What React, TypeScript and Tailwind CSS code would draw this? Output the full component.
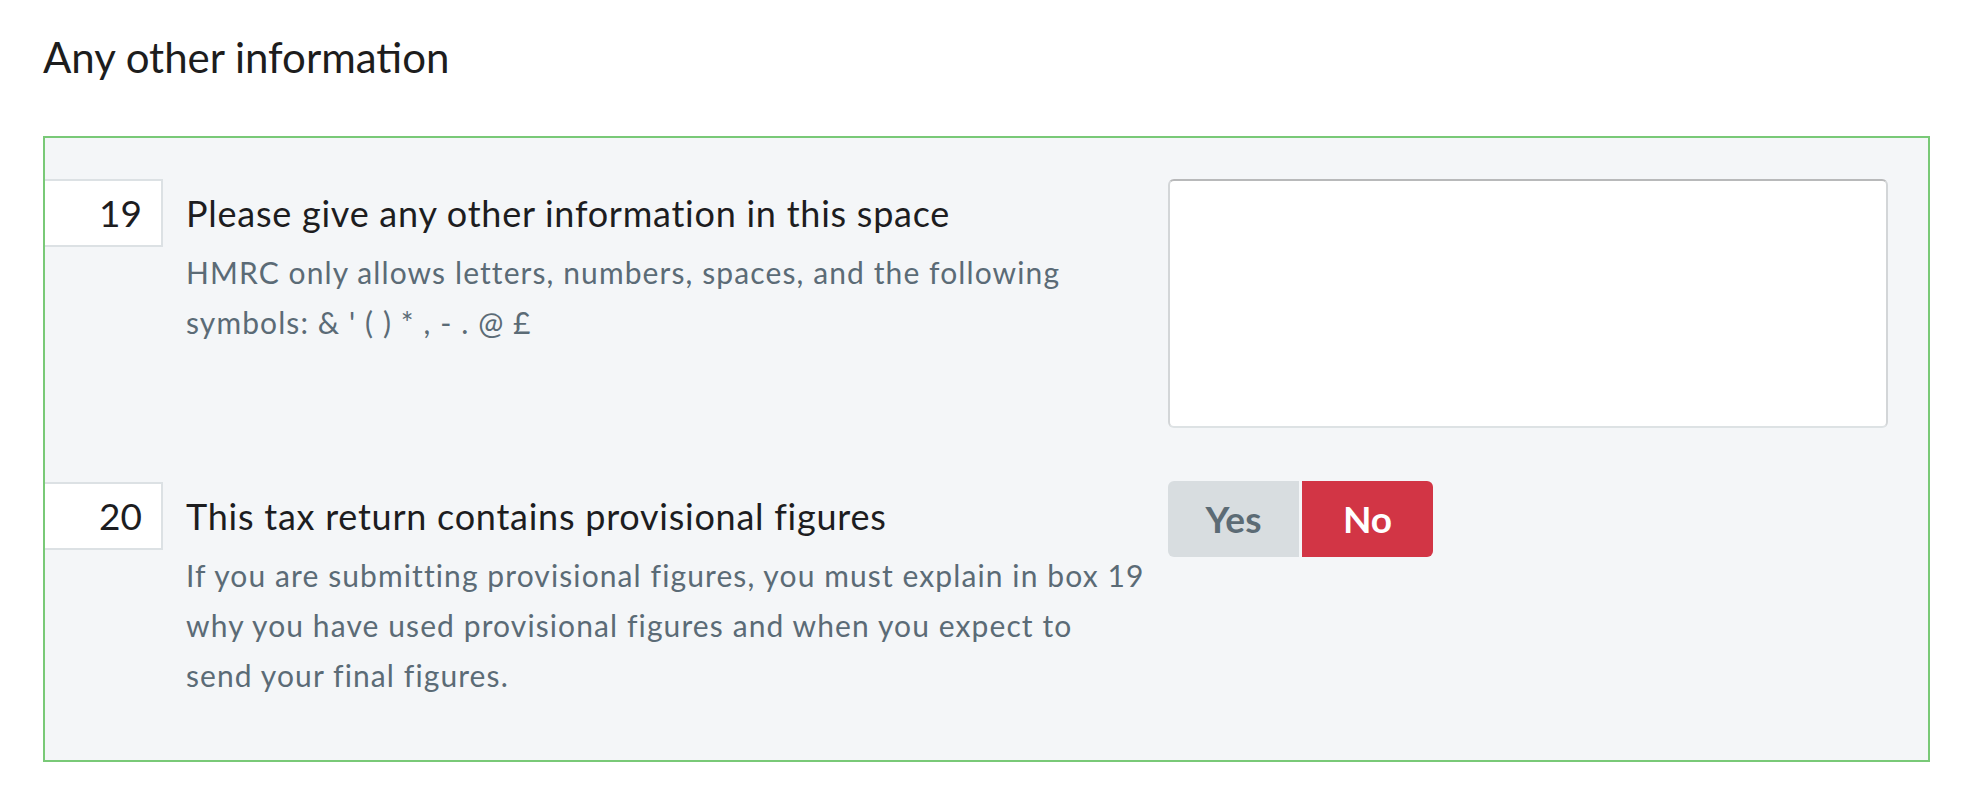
import { useState } from "react";

const font = { fontFamily: "Lato, 'Noto Sans', sans-serif" };

function NumberBox({ n }: { n: string }) {
    return (
        <div className="w-[118px] h-[68px] shrink-0 bg-white border-y-2 border-r-2 border-[#dce1e4] flex items-center justify-end pr-[19px] text-[37px] leading-[64px] text-[#1d1d1f]">
            {n}
        </div>
    );
}

export default function App() {
    const [provisional, setProvisional] = useState(false);
    const [info, setInfo] = useState("");

    return (
        <div className="min-h-screen bg-white pl-[43px] pr-[50px] pt-[32px]" style={font}>
            <h2 className="text-[42px] leading-[50px] text-[#1d1d1d] mb-[54px]">Any other information</h2>

            <div className="border-2 border-[#79c977] bg-[#f4f6f8] pt-[41px] pb-[60px] pr-[40px]">
                {/* box 19 */}
                <div className="flex items-start">
                    <NumberBox n="19" />
                    <div className="ml-[23px] flex-1 min-w-0">
                        <div className="text-[36px] leading-[68px] tracking-[0.75px] text-[#1d1d1f] whitespace-nowrap">
                            Please give any other information in this space
                        </div>
                        <div className="text-[30px] leading-[50px] tracking-[1.1px] text-[#5b6b76] whitespace-nowrap">
                            HMRC only allows letters, numbers, spaces, and the following
                            <br />
                            symbols: &amp; ' ( ) * , - . @ £
                        </div>
                    </div>
                    <textarea
                        value={info}
                        onChange={(e) => setInfo(e.target.value)}
                        className="ml-[20px] w-[720px] h-[249px] shrink-0 bg-white border-2 border-[#d3d6d8] border-t-[#b8b9ba] border-b-[#dde2e4] rounded-[6px] resize-none outline-none p-3 text-[30px]"
                    />
                </div>

                {/* box 20 */}
                <div className="flex items-start mt-[54px]">
                    <NumberBox n="20" />
                    <div className="ml-[23px] flex-1 min-w-0">
                        <div className="text-[36px] leading-[68px] tracking-[0.75px] text-[#1d1d1f] whitespace-nowrap">
                            This tax return contains provisional figures
                        </div>
                        <div className="text-[30px] leading-[50px] tracking-[1.1px] text-[#5b6b76] whitespace-nowrap">
                            If you are submitting provisional figures, you must explain in box 19
                            <br />
                            why you have used provisional figures and when you expect to
                            <br />
                            send your final figures.
                        </div>
                    </div>
                    <div className="ml-[20px] w-[720px] shrink-0 flex gap-[3px] -mt-[1px]">
                        <button
                            onClick={() => setProvisional(true)}
                            className={`w-[131px] h-[76px] rounded-l-[6px] text-[37px] font-bold ${provisional ? "bg-[#d23545] text-white" : "bg-[#d8dde0] text-[#5c6b75]"}`}
                        >
                            Yes
                        </button>
                        <button
                            onClick={() => setProvisional(false)}
                            className={`w-[131px] h-[76px] rounded-r-[6px] text-[37px] font-bold ${!provisional ? "bg-[#d23545] text-white" : "bg-[#d8dde0] text-[#5c6b75]"}`}
                        >
                            No
                        </button>
                    </div>
                </div>
            </div>
        </div>
    );
}
